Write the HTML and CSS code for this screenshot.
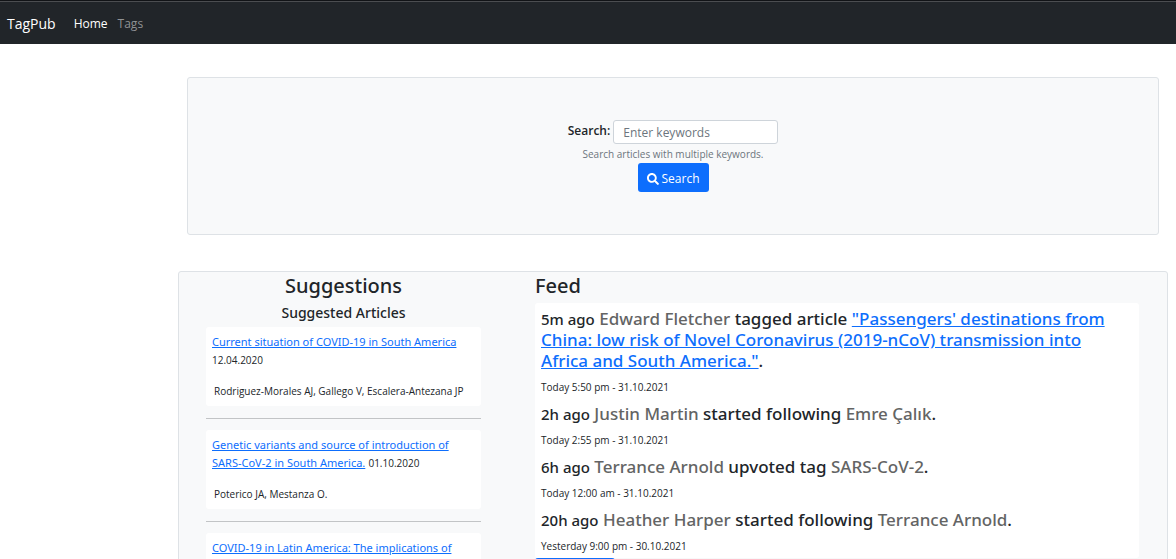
FILE: index.html
```html
<!DOCTYPE html>
<html lang="en">
<head>
<meta charset="utf-8">
<meta name="viewport" content="width=device-width, initial-scale=1">
<title>TagPub</title>
<link rel="stylesheet" href="styles.css">
</head>
<body>
<nav class="navbar">
  <a class="brand" href="#">TagPub</a>
  <a class="nav-link active" href="#">Home</a>
  <a class="nav-link" href="#">Tags</a>
</nav>
<main class="content">
  <form class="panel search-panel">
    <div class="search-row">
      <label for="keywords">Search:</label>
      <input id="keywords" type="text" placeholder="Enter keywords">
    </div>
    <small class="hint">Search articles with multiple keywords.</small>
    <button class="btn search-btn" type="button">
      <svg class="search-icon" viewBox="0 0 512 512" aria-hidden="true"><path fill="currentColor" d="M505 442.700L405.300 343c-4.500-4.500-10.600-7-17-7H372c27.600-35.300 44-79.700 44-128C416 93.100 322.900 0 208 0S0 93.100 0 208s93.100 208 208 208c48.300 0 92.700-16.400 128-44v16.300c0 6.400 2.500 12.500 7 17l99.700 99.700c9.400 9.400 24.600 9.400 33.900 0l28.300-28.300c9.400-9.400 9.400-24.600.1-34zM208 336c-70.700 0-128-57.200-128-128 0-70.700 57.200-128 128-128 70.700 0 128 57.200 128 128 0 70.700-57.200 128-128 128z"/></svg>
      <span>Search</span>
    </button>
  </form>
  <div class="panel board">
    <section class="suggestions">
      <h2>Suggestions</h2>
      <h3>Suggested Articles</h3>
      <article class="card">
        <p><a href="#">Current situation of COVID-19 in South America</a> <small>12.04.2020</small></p>
        <p class="authors">Rodriguez-Morales AJ, Gallego V, Escalera-Antezana JP</p>
      </article>
      <hr>
      <article class="card">
        <p><a href="#">Genetic variants and source of introduction of SARS-CoV-2 in South America.</a> <small>01.10.2020</small></p>
        <p class="authors">Poterico JA, Mestanza O.</p>
      </article>
      <hr>
      <article class="card">
        <p><a href="#">COVID-19 in Latin America: The implications of</a></p>
      </article>
    </section>
    <section class="feed">
      <h2>Feed</h2>
      <div class="feed-list">
        <article>
          <h4><span class="ago">5m ago</span> <a class="ref" href="#">Edward Fletcher</a> tagged article <a href="#">"Passengers' destinations from China: low risk of Novel Coronavirus (2019-nCoV) transmission into Africa and South America."</a>.</h4>
          <time>Today 5:50 pm - 31.10.2021</time>
        </article>
        <article>
          <h4><span class="ago">2h ago</span> <a class="ref" href="#">Justin Martin</a> started following <a class="ref" href="#">Emre Çalık</a>.</h4>
          <time>Today 2:55 pm - 31.10.2021</time>
        </article>
        <article>
          <h4><span class="ago">6h ago</span> <a class="ref" href="#">Terrance Arnold</a> upvoted tag <a class="ref" href="#">SARS-CoV-2</a>.</h4>
          <time>Today 12:00 am - 31.10.2021</time>
        </article>
        <article>
          <h4><span class="ago">20h ago</span> <a class="ref" href="#">Heather Harper</a> started following <a class="ref" href="#">Terrance Arnold</a>.</h4>
          <time>Yesterday 9:00 pm - 30.10.2021</time>
        </article>
      </div>
      <button class="btn more-btn" type="button" aria-label="More"></button>
    </section>
  </div>
</main>
</body>
</html>
```
FILE: styles.css
```css
* {
  box-sizing: border-box;
}

body {
  margin: 0;
  height: 100vh;
  overflow: hidden;
  background: #fff;
  color: #212529;
  font-family: "Open Sans", "Noto Sans", sans-serif;
  font-size: 12px;
  line-height: 18px;
}

h2, h3, h4, p {
  margin: 0;
}

h2, h3, h4, .card a {
  font-family: "Noto Sans", "Open Sans", sans-serif;
}

a {
  color: #0d6efd;
}

.navbar {
  display: flex;
  align-items: center;
  gap: 10px;
  padding: 6px 7px 4px;
  height: 44px;
  border-top: 1px solid #111316;
  background: #212529 linear-gradient(#4b4d50, #4b4d50) 0 0 / 100% 1px no-repeat;
}

.brand {
  margin-right: 8px;
  color: #fff;
  font-size: 14px;
  text-decoration: none;
}

.nav-link {
  color: #909294;
  text-decoration: none;
}

.nav-link.active {
  color: #fff;
}

.content {
  margin: 33px 8px 0 178px;
}

.panel {
  border: 1px solid #dee2e6;
  border-radius: 3px;
  background: #f8f9fa;
}

.search-panel {
  display: flex;
  flex-direction: column;
  align-items: center;
  margin: 0 9px 36px;
  padding: 42px 0;
}

.search-row {
  display: flex;
  align-items: center;
  gap: 3px;
}

.search-row label {
  padding-bottom: 3px;
  font-weight: 600;
}

.search-row input {
  width: 165px;
  height: 24px;
  padding: 0 9px;
  border: 1px solid #ced4da;
  border-radius: 3px;
  background: #fff;
  color: #212529;
  font: inherit;
}

.search-row input::placeholder {
  color: #6c757d;
  opacity: 1;
}

.hint {
  margin-top: 2px;
  color: #6c757d;
  font-size: 10px;
  line-height: 17px;
}

.btn {
  border: 0;
  border-radius: 3px;
  background: #0d6efd;
  color: #fff;
  font: inherit;
}

.search-btn {
  display: flex;
  align-items: center;
  gap: 3px;
  height: 29px;
  padding: 2px 9px 0;
}

.search-icon {
  width: 12px;
  height: 12px;
}

.board {
  display: grid;
  grid-template-columns: 275fr 604fr;
  gap: 54px;
  padding: 0 28px 24px 27px;
}

h2 {
  font-size: 20px;
  font-weight: 500;
  line-height: 28px;
}

.suggestions h2,
.suggestions h3 {
  text-align: center;
}

h3 {
  margin-bottom: 2px;
  font-size: 14px;
  font-weight: 500;
  line-height: 25px;
}

.card {
  padding: 6px;
  border-radius: 3px;
  background: #fff;
}

.card a {
  font-size: 11px;
}

.card small {
  font-size: 10px;
}

.authors {
  margin-top: 13px;
  padding-left: 2px;
  font-size: 10px;
}

hr {
  margin: 12px 0 11px;
  border: 0;
  border-top: 1px solid #c2c4c6;
}

.feed h2 {
  margin-bottom: 3px;
}

.feed-list {
  display: flex;
  flex-direction: column;
  gap: 7px;
  padding: 5px 16px 3px 6px;
  border-radius: 3px;
  background: #fff;
}

h4 {
  margin-bottom: 7px;
  font-size: 17px;
  font-weight: 500;
  line-height: 21px;
}

.ago {
  font-size: 15px;
  line-height: 1;
}

.ref {
  color: #636464;
  text-decoration: none;
}

time {
  display: block;
  font-size: 10px;
}

.more-btn {
  display: block;
  width: 80px;
  height: 29px;
}
```
